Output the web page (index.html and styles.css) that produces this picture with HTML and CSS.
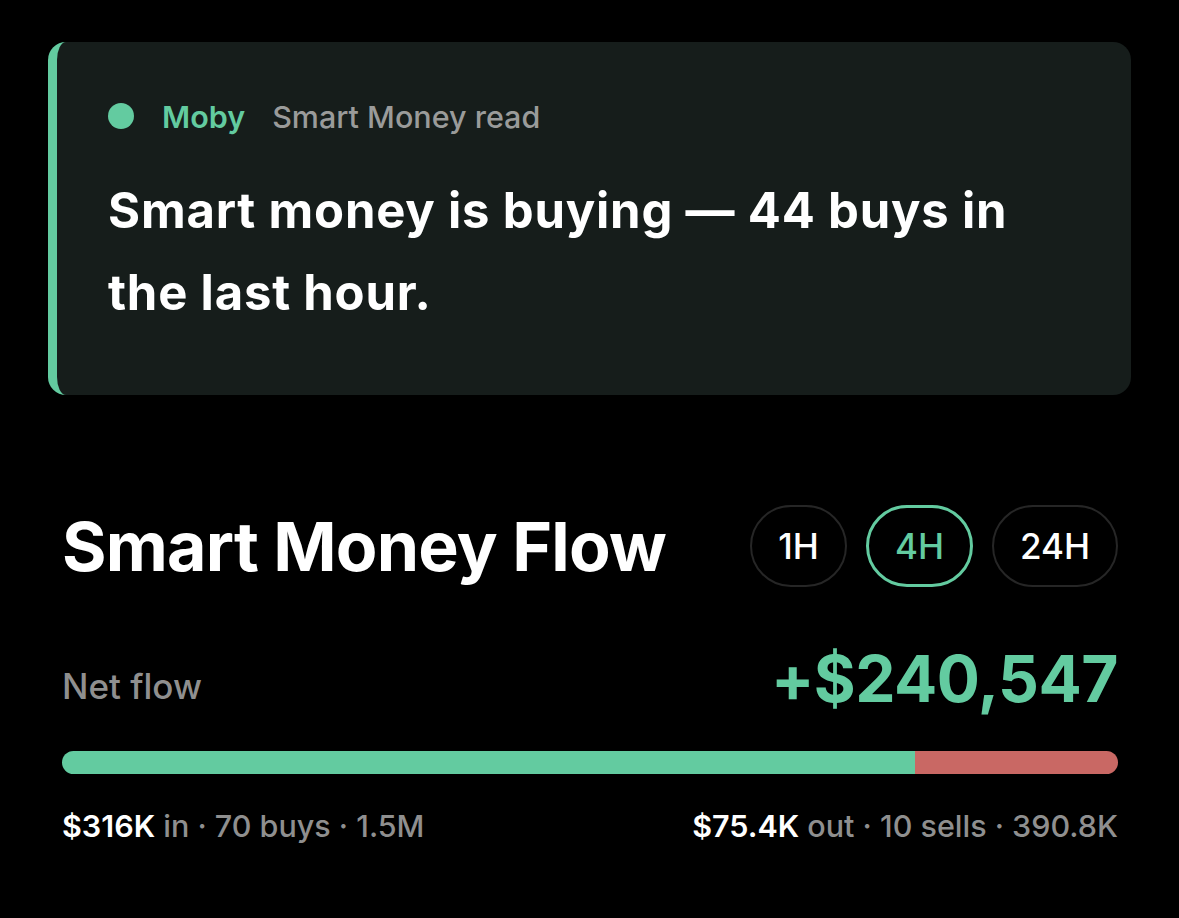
FILE: index.html
```html
<!DOCTYPE html>
<html lang="en">
<head>
<meta charset="utf-8">
<title>Smart Money Flow</title>
<link rel="stylesheet" href="styles.css">
</head>
<body>
<main class="screen">
  <section class="read-card">
    <div class="read-head">
      <span class="dot"></span>
      <span class="brand">Moby</span>
      <span class="read-label">Smart Money read</span>
    </div>
    <p class="read-text">Smart money is buying — 44 buys in the last hour.</p>
  </section>

  <section class="flow">
    <div class="flow-head">
      <h1 class="flow-title">Smart Money Flow</h1>
      <div class="ranges">
        <button class="range">1H</button>
        <button class="range active">4H</button>
        <button class="range">24H</button>
      </div>
    </div>

    <div class="net-row">
      <span class="net-label">Net flow</span>
      <span class="net-value">+$240,547</span>
    </div>

    <div class="bar">
      <div class="bar-in" style="width: 80.8%"></div>
      <div class="bar-out"></div>
    </div>

    <div class="stats">
      <span><b>$316K</b> in · 70 buys · 1.5M</span>
      <span><b>$75.4K</b> out · 10 sells · 390.8K</span>
    </div>
  </section>
</main>
</body>
</html>
```

FILE: styles.css
```css
* { box-sizing: border-box; }

html, body {
  margin: 0;
  background: #000;
  color: #fff;
  font-family: Inter, "Noto Sans", sans-serif;
}

.screen {
  width: 1179px;
  height: 918px;
  padding: 42px 48px 0 48px;
}

/* Moby read card */
.read-card {
  background: #161d1b;
  border-left: 9px solid #63cba0;
  border-radius: 18px;
  height: 353px;
  padding: 60px 60px 0 51px;
  display: flex;
  flex-direction: column;
  gap: 40px;
}

.read-head {
  display: flex;
  align-items: center;
  height: 28px;
  font-size: 30.5px;
  font-weight: 600;
}

.dot {
  width: 26px;
  height: 26px;
  border-radius: 50%;
  background: #63cba0;
  margin-right: 28px;
}

.brand { color: #63cba0; margin-right: 27px; }
.read-label { color: #9a9b9a; font-weight: 500; }

.read-text {
  margin: 0;
  max-width: 940px;
  font-size: 49px;
  font-weight: 700;
  line-height: 82px;
  letter-spacing: 0.8px;
}

/* Flow section */
.flow {
  padding: 110px 13px 0 14px;
}

.flow-head {
  display: flex;
  align-items: center;
  justify-content: space-between;
  height: 82px;
}

.flow-title {
  margin: 0;
  font-size: 68px;
  font-weight: 700;
  letter-spacing: -0.8px;
}

.ranges {
  display: flex;
  gap: 19px;
}

.range {
  height: 82px;
  padding: 0 26px;
  border-radius: 41px;
  border: 2px solid #262626;
  background: transparent;
  color: #fff;
  font-family: inherit;
  font-size: 35px;
  font-weight: 500;
}

.range.active {
  border: 3px solid #63cba0;
  color: #63cba0;
}

.net-row {
  display: flex;
  align-items: center;
  justify-content: space-between;
  margin-top: 56px;
  height: 70px;
}

.net-label {
  color: #8f8f8f;
  font-size: 35px;
  font-weight: 500;
  margin-top: 16px;
}

.net-value {
  color: #63cba0;
  font-size: 64px;
  font-weight: 700;
  letter-spacing: -0.5px;
}

.bar {
  display: flex;
  height: 23px;
  margin-top: 38px;
  border-radius: 12px;
  overflow: hidden;
}

.bar-in { background: #63cba0; }
.bar-out { flex: 1; background: #c96864; }

.stats {
  display: flex;
  justify-content: space-between;
  margin-top: 33px;
  font-size: 30.5px;
  font-weight: 500;
  color: #8f8f8f;
}

.stats b { color: #fff; font-weight: 600; }
```
